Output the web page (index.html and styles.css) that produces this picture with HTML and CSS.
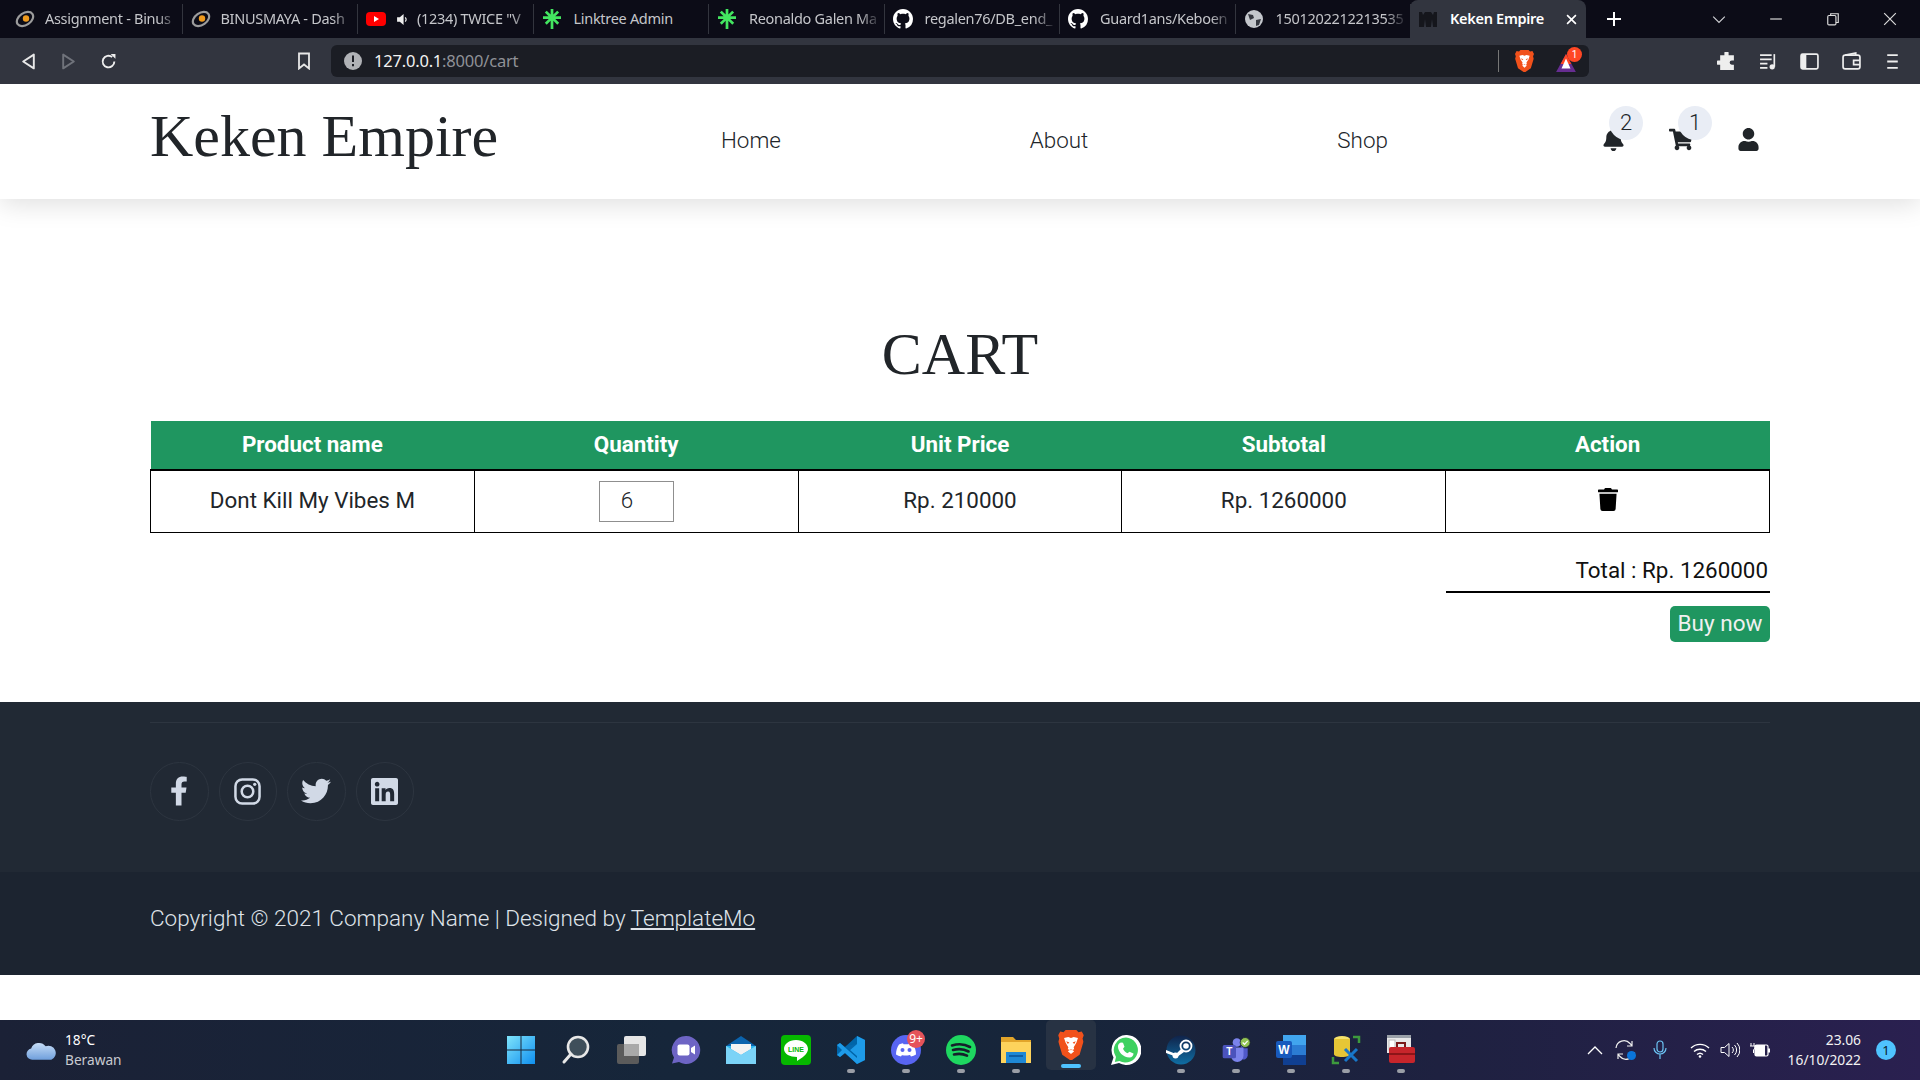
FILE: index.html
```html
<!DOCTYPE html>
<html lang="en">
<head>
<meta charset="utf-8">
<title>Keken Empire</title>
<link rel="stylesheet" href="styles.css">
</head>
<body>
<svg class="sprite" width="0" height="0" aria-hidden="true">
  <defs>
    <symbol id="brave" viewBox="0 0 24 28"><path fill="#f1511b" d="M7 0h10l2 2 3-.5L24 5l-1.200 3 .8 3-3.600 12L13 28h-2l-7.200-5L.2 11 1 8 0 5l2-3.500L5 2z"/><path fill="#fff" d="M12 18l-3 1.800 3 2.700 3-2.700zM5.500 7.500l4-1 2.500 1 2.500-1 4 1-1.500 4.500-2.500 4 .5 2-3 1-3-1 .5-2-2.500-4z"/><path fill="#f1511b" d="M7.500 10.500l3 1.200-1.500 1.300zM16.500 10.500l-3 1.200 1.500 1.300z"/></symbol>
    <symbol id="binus" viewBox="0 0 20 20"><ellipse cx="10" cy="10" rx="9" ry="6" fill="none" stroke="#9c9c9c" stroke-width="2.200" transform="rotate(-35 10 10)"/><circle cx="11" cy="9.500" r="3.200" fill="#ef9a1d"/></symbol>
    <symbol id="tree" viewBox="0 0 20 22"><path fill="#43e660" d="M8.500 0h3v6l4.200-4.200 2.100 2.100L13.600 8H20v3h-6.400l4.300 4.200-2.100 2.100L11.500 13v9h-3v-9l-4.300 4.300-2.100-2.100L6.400 11H0V8h6.200L2.100 3.900l2.100-2.100L8.500 6z"/></symbol>
    <symbol id="gh" viewBox="0 0 16 16"><path fill="#fff" d="M8 0C3.580 0 0 3.580 0 8c0 3.540 2.290 6.530 5.470 7.590.4.070.55-.17.55-.38 0-.19-.01-.82-.01-1.490-2.010.37-2.530-.49-2.690-.94-.09-.23-.48-.94-.82-1.130-.28-.15-.68-.52-.01-.53.63-.01 1.080.58 1.230.82.72 1.210 1.870.87 2.330.66.070-.52.28-.87.51-1.070-1.780-.2-3.640-.89-3.640-3.950 0-.87.31-1.590.82-2.150-.08-.2-.36-1.020.08-2.120 0 0 .67-.21 2.200.82.64-.18 1.320-.27 2-.27s1.360.09 2 .27c1.530-1.040 2.200-.82 2.200-.82.44 1.100.16 1.920.08 2.120.51.56.82 1.270.82 2.150 0 3.070-1.870 3.750-3.650 3.950.29.25.54.73.54 1.480 0 1.070-.01 1.930-.01 2.200 0 .21.15.46.55.38A8.010 8.010 0 0 0 16 8c0-4.420-3.580-8-8-8z"/></symbol>
  </defs>
</svg>

<div class="screen">
  <div class="tabbar">
    <div class="tab"><svg class="tab-ico tab-ico-tight" viewBox="0 0 20 20"><use href="#binus"/></svg><span class="tab-label">Assignment - Binus</span></div>
    <div class="tab"><svg class="tab-ico tab-ico-tight" viewBox="0 0 20 20"><use href="#binus"/></svg><span class="tab-label">BINUSMAYA - Dash</span></div>
    <div class="tab"><svg class="tab-ico" viewBox="0 0 20 20"><rect y="3" width="20" height="14" rx="4" fill="#f00"/><path d="M8 7l5 3-5 3z" fill="#fff"/></svg><svg class="tab-mute" viewBox="0 0 12 12"><path fill="#eee" d="M1 4h2.500L7 1v10L3.500 8H1z"/><path d="M8.500 4a3 3 0 0 1 0 4" stroke="#eee" fill="none"/></svg><span class="tab-label">(1234) TWICE "V</span></div>
    <div class="tab"><svg class="tab-ico" viewBox="0 0 20 22"><use href="#tree"/></svg><span class="tab-label tab-label-plain">Linktree Admin</span></div>
    <div class="tab"><svg class="tab-ico" viewBox="0 0 20 22"><use href="#tree"/></svg><span class="tab-label">Reonaldo Galen Ma</span></div>
    <div class="tab"><svg class="tab-ico" viewBox="0 0 16 16"><use href="#gh"/></svg><span class="tab-label">regalen76/DB_end_</span></div>
    <div class="tab"><svg class="tab-ico" viewBox="0 0 16 16"><use href="#gh"/></svg><span class="tab-label">Guard1ans/Keboen</span></div>
    <div class="tab"><svg class="tab-ico" viewBox="0 0 20 20"><circle cx="10" cy="10" r="9" fill="#c4c7cc"/><path d="M4 5l5 1 1 3-4 2zM12 11l5-1-2 6-3 1z" fill="#34373f"/></svg><span class="tab-label">1501202212213535</span></div>
    <div class="tab tab-active"><svg class="tab-ico" viewBox="0 0 20 20"><path fill="#15161c" d="M1 3h3l1 3 2-3h6l2 3 1-3h3v15h-4l-1-8-1 8H8l-1-8-1 8H1z"/></svg><span class="tab-label tab-label-active">Keken Empire</span><svg class="tab-close" viewBox="0 0 10 10"><path d="M1 1l8 8M9 1l-8 8" stroke="#fff" stroke-width="1.500"/></svg></div>
    <svg class="new-tab" viewBox="0 0 14 14"><path d="M7 0v14M0 7h14" stroke="#fff" stroke-width="2"/></svg>
    <div class="win-controls">
      <svg class="win-ico" viewBox="0 0 12 12"><path d="M1 4l5 5 5-5" stroke="#cfd0d4" fill="none"/></svg>
      <svg class="win-ico" viewBox="0 0 12 12"><path d="M1 6h10" stroke="#dcdcdc"/></svg>
      <svg class="win-ico" viewBox="0 0 12 12"><rect x="1.500" y="3" width="7" height="8" rx="1" stroke="#dcdcdc" fill="none"/><path d="M4 3V1.500h6.500V9H8.500" stroke="#dcdcdc" fill="none"/></svg>
      <svg class="win-ico" viewBox="0 0 12 12"><path d="M1 1l10 10M11 1L1 11" stroke="#dcdcdc"/></svg>
    </div>
  </div>

  <div class="toolbar">
    <div class="nav-btns">
      <svg class="tb-ico" viewBox="0 0 14 16"><path d="M12 1.500v13L2 8z" stroke="#e8e8e8" stroke-width="1.800" fill="none" stroke-linejoin="round"/></svg>
      <svg class="tb-ico" viewBox="0 0 14 16"><path d="M2 1.500v13L12 8z" stroke="#70737b" stroke-width="1.800" fill="none" stroke-linejoin="round"/></svg>
      <svg class="tb-ico" viewBox="0 0 16 16"><path d="M13.500 8A5.500 5.500 0 1 1 11.500 3.800" stroke="#eee" stroke-width="1.800" fill="none"/><path d="M10 1h4.500v4.500z" fill="#eee"/></svg>
    </div>
    <svg class="bookmark" viewBox="0 0 14 18"><path d="M2 1.500h10v15L7 12.500l-5 4z" stroke="#e8e8e8" stroke-width="1.800" fill="none"/></svg>
    <div class="omnibox">
      <svg class="info" viewBox="0 0 18 18"><circle cx="9" cy="9" r="9" fill="#b0b2b6"/><path d="M8 3.500h2V10H8zM8 12h2v2.200H8z" fill="#1b1d24"/></svg>
      <span class="url"><span class="url-host">127.0.0.1</span>:8000/cart</span>
      <span class="omni-sep"></span>
      <svg class="omni-brave" viewBox="0 0 24 28"><use href="#brave"/></svg>
      <div class="bat">
        <svg class="bat-ico" viewBox="0 0 22 20"><path d="M11 0l11 20H0z" fill="#662d91"/><path d="M11 0l6 11H5z" fill="#ff4724"/><path d="M11 5l5 11H6z" fill="#fff"/></svg>
        <span class="bat-badge">1</span>
      </div>
    </div>
    <div class="ext-btns">
      <svg class="ext-ico" viewBox="0 0 18 18"><path fill="#eee" d="M7 1a2 2 0 0 1 4 0v2h5v5h-2a2 2 0 0 0 0 4h2v5H3v-5H1a2 2 0 0 1 0-4h2V3h4z"/></svg>
      <svg class="ext-ico" viewBox="0 0 18 18"><path d="M1 3h11M1 7h11M1 11h7M1 15h7" stroke="#eee" stroke-width="1.600"/><path d="M14.500 2v12" stroke="#eee" stroke-width="1.600"/><circle cx="12.500" cy="14" r="2.500" fill="#eee"/></svg>
      <svg class="ext-ico" viewBox="0 0 18 18"><rect x="1" y="2" width="16" height="14" rx="1.500" stroke="#eee" stroke-width="1.600" fill="none"/><rect x="1" y="2" width="5" height="14" fill="#eee"/></svg>
      <svg class="ext-ico" viewBox="0 0 18 18"><rect x="1" y="3" width="16" height="13" rx="2" stroke="#eee" stroke-width="1.600" fill="none"/><path d="M3 3l10-2v2M17 8h-6v4h6" stroke="#eee" stroke-width="1.600" fill="none"/></svg>
      <svg class="ext-ico" viewBox="0 0 18 18"><path d="M4 3h10M4 9h10M4 15h10" stroke="#eee" stroke-width="1.800"/></svg>
    </div>
  </div>

  <div class="viewport">
    <header class="site-header">
      <div class="logo">Keken Empire</div>
      <nav class="site-nav">
        <a class="nav-link">Home</a>
        <a class="nav-link">About</a>
        <a class="nav-link">Shop</a>
      </nav>
      <div class="site-icons">
        <div class="site-icon">
          <svg class="ico-bell" viewBox="0 0 448 512"><path fill="#212529" d="M224 512c35.320 0 63.970-28.650 63.970-64H160.030c0 35.350 28.650 64 63.970 64zm215.390-149.710c-19.320-20.760-55.470-51.990-55.470-154.290 0-77.700-54.480-139.900-127.940-155.160V32c0-17.670-14.320-32-31.980-32s-31.980 14.330-31.980 32v20.840C118.560 68.100 64.080 130.300 64.080 208c0 102.300-36.150 133.530-55.470 154.290-6 6.450-8.660 14.160-8.610 21.710.11 16.400 12.980 32 32.100 32h383.800c19.120 0 32-15.600 32.100-32 .05-7.550-2.610-15.270-8.610-21.710z"/></svg>
          <span class="count count-bell">2</span>
        </div>
        <div class="site-icon">
          <svg class="ico-cart" viewBox="0 0 576 512"><path fill="#212529" d="M528.120 301.319l47.273-208C578.806 78.301 567.391 64 551.990 64H159.208l-9.166-44.810C147.758 8.021 137.930 0 126.529 0H24C10.745 0 0 10.745 0 24v16c0 13.255 10.745 24 24 24h69.883l70.248 343.435C147.325 417.100 136 435.222 136 456c0 30.928 25.072 56 56 56s56-25.072 56-56c0-15.674-6.447-29.835-16.824-40h209.647C430.447 426.165 424 440.326 424 456c0 30.928 25.072 56 56 56s56-25.072 56-56c0-22.172-12.888-41.332-31.579-50.405l5.517-24.276c3.413-15.018-8.002-29.319-23.403-29.319H218.117l-6.545-32h293.145c11.206 0 20.920-7.754 23.403-18.681z"/></svg>
          <span class="count count-cart">1</span>
        </div>
        <div class="site-icon">
          <svg class="ico-user" viewBox="0 0 448 512"><path fill="#212529" d="M224 256c70.700 0 128-57.300 128-128S294.700 0 224 0 96 57.300 96 128s57.300 128 128 128zm89.600 32h-16.700c-22.200 10.200-46.900 16-72.900 16s-50.600-5.800-72.900-16h-16.700C60.200 288 0 348.200 0 422.400V464c0 26.500 21.500 48 48 48h352c26.500 0 48-21.500 48-48v-41.600c0-74.200-60.200-134.400-134.400-134.400z"/></svg>
        </div>
      </div>
    </header>

    <main class="cart">
      <h1 class="cart-title">CART</h1>
      <table class="cart-table">
        <thead>
          <tr><th>Product name</th><th>Quantity</th><th>Unit Price</th><th>Subtotal</th><th>Action</th></tr>
        </thead>
        <tbody>
          <tr>
            <td class="cell-text">Dont Kill My Vibes M</td>
            <td><input class="qty" type="text" value="6"></td>
            <td class="cell-text">Rp. 210000</td>
            <td class="cell-text">Rp. 1260000</td>
            <td class="cell-text"><svg class="ico-trash" viewBox="0 0 448 512"><path d="M432 32H312l-9.400-18.700A24 24 0 0 0 281.100 0H166.800a23.720 23.720 0 0 0-21.400 13.300L136 32H16A16 16 0 0 0 0 48v32a16 16 0 0 0 16 16h416a16 16 0 0 0 16-16V48a16 16 0 0 0-16-16zM53.200 467a48 48 0 0 0 47.900 45h245.800a48 48 0 0 0 47.900-45L416 128H32z"/></svg></td>
          </tr>
        </tbody>
      </table>
      <div class="summary">
        <div class="total">Total : Rp. 1260000</div>
        <button class="buy" type="button">Buy now</button>
      </div>
    </main>

    <footer class="site-footer">
      <div class="footer-top">
        <div class="footer-rule"></div>
        <div class="socials">
          <a class="social"><svg class="soc-fb" viewBox="0 0 320 512"><path fill="#d1d9e6" d="M279.140 288l14.220-92.660h-88.910v-60.130c0-25.350 12.420-50.060 52.240-50.060h40.420V6.260S260.430 0 225.360 0c-73.220 0-121.080 44.380-121.080 124.720v70.620H22.890V288h81.390v224h100.170V288z"/></svg></a>
          <a class="social"><svg class="soc-ig" viewBox="0 0 28 28"><rect x="1.500" y="1.500" width="25" height="25" rx="7" fill="none" stroke="#d1d9e6" stroke-width="2.600"/><circle cx="14" cy="14" r="6" fill="none" stroke="#d1d9e6" stroke-width="2.600"/><circle cx="21.500" cy="6.500" r="1.700" fill="#d1d9e6"/></svg></a>
          <a class="social"><svg class="soc-tw" viewBox="0 0 512 512"><path fill="#d1d9e6" d="M459.370 151.716c.325 4.548.325 9.097.325 13.645 0 138.720-105.583 298.558-298.558 298.558-59.452 0-114.680-17.219-161.137-47.106 8.447.974 16.568 1.299 25.340 1.299 49.055 0 94.213-16.568 130.274-44.832-46.132-.975-84.792-31.188-98.112-72.772 6.498.974 12.995 1.624 19.818 1.624 9.421 0 18.843-1.300 27.614-3.573-48.081-9.747-84.143-51.980-84.143-102.985v-1.299c13.969 7.797 30.214 12.670 47.431 13.319-28.264-18.843-46.781-51.005-46.781-87.391 0-19.492 5.197-37.360 14.294-52.954 51.655 63.675 129.300 105.258 216.365 109.807-1.624-7.797-2.599-15.918-2.599-24.040 0-57.828 46.782-104.934 104.934-104.934 30.213 0 57.502 12.670 76.670 33.137 23.715-4.548 46.456-13.320 66.599-25.340-7.798 24.366-24.366 44.833-46.132 57.827 21.117-2.273 41.584-8.122 60.426-16.243-14.292 20.791-32.161 39.308-52.628 54.253z"/></svg></a>
          <a class="social"><svg class="soc-in" viewBox="0 32 448 448"><path fill="#d1d9e6" d="M416 32H31.900C14.300 32 0 46.500 0 64.300v383.400C0 465.500 14.300 480 31.900 480H416c17.600 0 32-14.500 32-32.300V64.300c0-17.800-14.400-32.300-32-32.300zM135.400 416H69V202.200h66.500V416zm-33.200-243c-21.300 0-38.500-17.300-38.500-38.500S80.900 96 102.200 96c21.200 0 38.500 17.300 38.500 38.500 0 21.300-17.200 38.500-38.500 38.500zm282.100 243h-66.400V312c0-24.800-.5-56.700-34.500-56.700-34.600 0-39.900 27-39.900 54.900V416h-66.400V202.200h63.700v29.200h.9c8.900-16.800 30.600-34.500 62.900-34.500 67.200 0 79.700 44.300 79.700 101.900V416z"/></svg></a>
        </div>
      </div>
      <div class="footer-bottom">Copyright © 2021 Company Name | Designed by <a class="footer-link">TemplateMo</a></div>
    </footer>
  </div>

  <div class="taskbar">
    <div class="weather">
      <svg class="cloud" viewBox="0 0 30 20"><defs><linearGradient id="cl" x1="0" y1="0" x2="0" y2="1"><stop offset="0" stop-color="#c6ddf7"/><stop offset="1" stop-color="#6f9fdc"/></linearGradient></defs><path fill="url(#cl)" d="M6 19a5.500 5.500 0 0 1-1-10.900A8 8 0 0 1 19 6a6.500 6.500 0 0 1 5.500 13z"/></svg>
      <div class="weather-text"><span class="temp">18°C</span><span class="cond">Berawan</span></div>
    </div>
    <div class="dock">
      <div class="app"><svg class="app-ico" viewBox="0 0 30 30"><defs><linearGradient id="w" x1="0" y1="0" x2="1" y2="1"><stop offset="0" stop-color="#7fe4fb"/><stop offset="1" stop-color="#0f8fef"/></linearGradient></defs><path fill="url(#w)" d="M1 1h13.500v13.500H1zM15.500 1H29v13.500H15.500zM1 15.500h13.500V29H1zM15.500 15.500H29V29H15.500z"/></svg></div>
      <div class="app"><svg class="app-ico" viewBox="0 0 30 30"><circle cx="17" cy="12" r="10" fill="#3f4f5b" stroke="#e8e8e8" stroke-width="2.600"/><path d="M10 19l-7 8" stroke="#e8e8e8" stroke-width="3" stroke-linecap="round"/></svg></div>
      <div class="app"><svg class="app-ico" viewBox="0 0 30 30"><rect x="8" y="1" width="22" height="20" rx="2" fill="#e6e6e6"/><rect x="1" y="9" width="22" height="20" rx="2" fill="#5b5b5b"/><rect x="8" y="9" width="15" height="12" fill="#a9a9a9"/></svg></div>
      <div class="app"><svg class="app-ico" viewBox="0 0 30 30"><path fill="#6d64c4" d="M15 1a14 14 0 1 1-7 26l-7 1.500 2-6A14 14 0 0 1 15 1z"/><rect x="6.500" y="9.500" width="12" height="11" rx="2" fill="#fff"/><path d="M20 13l4-2.500v9L20 17z" fill="#fff"/></svg></div>
      <div class="app"><svg class="app-ico" viewBox="0 0 30 30"><path fill="#0b63ad" d="M15 1l15 10v4H0v-4z"/><rect y="11" width="30" height="18" fill="#29b6f0"/><path fill="#f2f2f2" d="M5 9h20v5l-10 6-10-6z"/><path fill="#7bd3f7" d="M0 11l15 9 15-9v18H0z"/></svg></div>
      <div class="app"><svg class="app-ico" viewBox="0 0 30 30"><rect width="30" height="30" rx="4" fill="#06b800"/><path fill="#fff" d="M15 5c7 0 12 4 12 9 0 5-6 9-11 12v-4C9 22 3 19 3 14c0-5 5-9 12-9z"/><text class="line-text" x="15" y="17" text-anchor="middle">LINE</text></svg></div>
      <div class="app app-on"><svg class="app-ico" viewBox="0 0 30 30"><path fill="#0065a9" d="M21 1l8 4v20l-8 4-12-11-5 4-3-2v-10l3-2 5 4z"/><path fill="#1e9be8" d="M21 1l8 4v20l-8 4V21l-7-6 7-6zM1 10l3-2 17 15v6L9 18l-5 4-3-2 5-5z"/><path fill="#0d6fb5" d="M21 9l-7 6-5-4z" opacity=".4"/></svg></div>
      <div class="app app-on"><svg class="app-ico" viewBox="0 0 30 30"><circle cx="15" cy="15" r="15" fill="#5865f2"/><path fill="#fff" d="M8 9.500a16 16 0 0 1 4-1.200l.5 1c1.600-.2 3.400-.2 5 0l.5-1a16 16 0 0 1 4 1.200c2 3 3 6 3 10a14 14 0 0 1-5 2l-1-1.500 2-1c-4 2-9 2-12 0l2 1-1 1.500a14 14 0 0 1-5-2c0-4 1-7 3-10z"/><circle cx="11.500" cy="15" r="2" fill="#5865f2"/><circle cx="18.500" cy="15" r="2" fill="#5865f2"/></svg><span class="app-badge">9+</span></div>
      <div class="app app-on"><svg class="app-ico" viewBox="0 0 30 30"><circle cx="15" cy="15" r="15" fill="#1ed760"/><path d="M6 10.500c6-1.800 13-1.300 18 1.500M7 15c5-1.400 11-1 15.500 1.500M8 19.500c4.500-1.100 9-.8 13 1.200" stroke="#15202b" stroke-width="2.600" stroke-linecap="round" fill="none"/></svg></div>
      <div class="app app-on"><svg class="app-ico" viewBox="0 0 30 30"><path fill="#e2a52a" d="M0 2h12l3 3h15v23H0z"/><path fill="#fdd35c" d="M0 7h30v21H0z"/><path fill="#1e88d6" d="M5 17h20v11H5z"/><path fill="#0e5ea5" d="M8 20h14v2H8z"/></svg></div>
      <div class="app app-on app-active"><svg class="app-ico" viewBox="0 0 24 28"><use href="#brave"/></svg></div>
      <div class="app"><svg class="app-ico" viewBox="0 0 30 30"><path fill="#fff" d="M15 0a15 15 0 1 1-7 28L0 30l2.500-7.500A15 15 0 0 1 15 0z"/><path fill="#3ed160" d="M15 2.500A12.500 12.500 0 1 1 8.500 26L3.800 27l1.200-5A12.500 12.500 0 0 1 15 2.500z"/><path fill="#fff" d="M10 7.500l2 .2 1.500 4-1.500 2c1 2 2.500 3.500 4.500 4.500l2-1.500 4 1.800c0 2-1.500 4-4 4C12 22.500 7 16.500 7 11.500c0-2 1.200-3.500 3-4z"/></svg></div>
      <div class="app app-on"><svg class="app-ico" viewBox="0 0 30 30"><defs><linearGradient id="st" x1="0" y1="0" x2="0" y2="1"><stop offset="0" stop-color="#10234a"/><stop offset="1" stop-color="#0f6ea3"/></linearGradient></defs><circle cx="15" cy="15" r="14.500" fill="url(#st)"/><circle cx="20" cy="11" r="5.500" fill="none" stroke="#fff" stroke-width="1.800"/><circle cx="20" cy="11" r="2.800" fill="#fff"/><path d="M0 15l10 4 5-5 3 3-7 5-11-4z" fill="#fff"/><circle cx="9.500" cy="20.500" r="3" fill="#fff"/></svg></div>
      <div class="app app-on"><svg class="app-ico" viewBox="0 0 36 30"><circle cx="19" cy="6" r="5" fill="#7b83eb"/><circle cx="27" cy="9" r="3.500" fill="#5059c9"/><path fill="#5059c9" d="M23 13h9v9a5 5 0 0 1-7 4z"/><path fill="#7b83eb" d="M12 12h15v10a7.500 7.500 0 0 1-15 0z"/><rect x="2" y="9" width="16" height="16" rx="2" fill="#4b53bc"/><text class="teams-text" x="10" y="21" text-anchor="middle">T</text><circle cx="29" cy="6" r="6" fill="#92c353" stroke="#1c2333" stroke-width="1"/><path d="M26 6l2.200 2.200L32 4" stroke="#fff" stroke-width="1.500" fill="none"/></svg></div>
      <div class="app app-on"><svg class="app-ico" viewBox="0 0 30 30"><rect x="7" width="23" height="10" fill="#41a5ee"/><rect x="7" y="10" width="23" height="10" fill="#2b7cd3"/><rect x="7" y="20" width="23" height="10" fill="#103f91"/><rect y="6" width="16" height="17" rx="2" fill="#185abd"/><text class="word-text" x="8" y="19" text-anchor="middle">W</text></svg></div>
      <div class="app app-on"><svg class="app-ico" viewBox="0 0 30 30"><path d="M2 22v6h6M22 2h6v6" stroke="#3d9a3d" stroke-width="2.500" fill="none"/><ellipse cx="11" cy="4" rx="8" ry="3" fill="#f6e26b"/><path fill="#e6c636" d="M3 4h16v15c0 2-3 3-8 3s-8-1-8-3z"/><path d="M14 26l12-12M14 14l12 12" stroke="#1877c9" stroke-width="3"/></svg></div>
      <div class="app app-on"><svg class="app-ico" viewBox="0 0 30 30"><rect x="1" y="0" width="24" height="18" fill="#e8e8e8"/><rect x="1" y="0" width="24" height="3" fill="#9aa0a8"/><rect x="3" y="5" width="6" height="10" fill="#fff" stroke="#bbb"/><path d="M11 12V8h8v4" stroke="#7a1a1a" stroke-width="2" fill="none"/><rect x="3" y="12" width="26" height="16" rx="2" fill="#c7252b"/><rect x="3" y="18" width="26" height="2" fill="#8c1518"/></svg></div>
    </div>
    <div class="tray">
      <svg class="tray-chev" viewBox="0 0 16 10"><path d="M1 9l7-7 7 7" stroke="#fff" stroke-width="1.300" fill="none"/></svg>
      <div class="tray-sync">
        <svg class="tray-ico" viewBox="0 0 20 20"><path d="M1 8a8 8 0 0 1 14-4.500L17 6M19 12a8 8 0 0 1-14 4.500L3 14M17 1v5h-5M3 19v-5h5" stroke="#eee" stroke-width="1.200" fill="none"/></svg>
        <span class="sync-dot"></span>
      </div>
      <svg class="tray-mic" viewBox="0 0 14 20"><rect x="4" y="1" width="6" height="11" rx="3" fill="none" stroke="#6cc4f4" stroke-width="1.200"/><path d="M1 8a6 6 0 0 0 12 0M7 14v5" stroke="#6cc4f4" stroke-width="1.200" fill="none"/></svg>
      <svg class="tray-wifi" viewBox="0 0 20 16"><path d="M1 6a13 13 0 0 1 18 0M4 9.500a9 9 0 0 1 12 0M7 12.500a4.500 4.500 0 0 1 6 0" stroke="#fff" stroke-width="1.400" fill="none"/><circle cx="10" cy="14.500" r="1.300" fill="#fff"/></svg>
      <svg class="tray-vol" viewBox="0 0 20 16"><path d="M1 5.500h3.500L9 1.500v13l-4.500-4H1z" stroke="#fff" fill="none"/><path d="M12 5a4 4 0 0 1 0 6M14.500 3a7 7 0 0 1 0 10M17 1a10 10 0 0 1 0 14" stroke="#fff" fill="none"/></svg>
      <svg class="tray-bat" viewBox="0 0 20 16"><rect x="5" y="3" width="13" height="11" rx="1.500" fill="none" stroke="#fff" stroke-width="1.200"/><rect x="5" y="3" width="10" height="11" fill="#fff"/><rect x="18" y="6.500" width="2" height="4" fill="#fff"/><path d="M1 1v3M4 1v3M0 4h5v2l-1.500 2v3" stroke="#fff" fill="none"/></svg>
      <div class="clock"><span>23.06</span><span>16/10/2022</span></div>
      <span class="notif">1</span>
    </div>
  </div>
</div>
</body>
</html>
```

FILE: styles.css
```css
* { box-sizing: border-box; }
html, body { margin: 0; padding: 0; height: 100%; overflow: hidden; background: #fff; }
.sprite { position: absolute; }
.screen { width: 1920px; height: 1080px; display: flex; flex-direction: column; font-family: Roboto, "Liberation Sans", sans-serif; }

/* Browser chrome */
.tabbar { height: 38px; flex: none; background: #0c0c17; display: flex; align-items: stretch; padding-left: 7px; }
.tab { width: 175.500px; flex: none; display: flex; align-items: center; padding: 0 0 0 8px; margin-top: 4px; margin-bottom: 4px; border-right: 1px solid #33353e; overflow: hidden; font-family: "Noto Sans", sans-serif; font-size: 14.500px; letter-spacing: -.3px; color: #c5c6ca; }
.tab:nth-last-child(3) { border-right: none; }
.tab-ico { width: 20px; height: 20px; flex: none; margin-right: 12px; }
.tab-ico-tight { margin-right: 10px; }
.tab-mute { width: 13px; height: 13px; flex: none; margin-right: 8px; margin-left: -2px; }
.tab-label { white-space: nowrap; overflow: hidden; flex: 1; padding-bottom: 2px; -webkit-mask-image: linear-gradient(90deg, #000 82%, transparent 98%); mask-image: linear-gradient(90deg, #000 82%, transparent 98%); }
.tab-label-plain { -webkit-mask-image: none; mask-image: none; }
.tab-active { background: #32353f; margin: 0; margin-left: -1px; border: none; border-radius: 8px 8px 0 0; width: 176px; color: #fff; padding-right: 9px; }
.tab-label-active { -webkit-mask-image: none; mask-image: none; font-weight: 600; }
.tab-close { width: 11px; height: 11px; flex: none; }
.new-tab { width: 14px; height: 14px; margin: 12px 0 0 21px; flex: none; }
.win-controls { margin-left: auto; display: flex; align-items: center; gap: 43px; padding-right: 23px; }
.win-ico { width: 14px; height: 14px; }

.toolbar { height: 46px; flex: none; background: #32353f; display: flex; align-items: center; padding: 0 0 0 20px; }
.nav-btns { display: flex; align-items: center; gap: 23px; width: 277px; }
.tb-ico { width: 17px; height: 17px; flex: none; }
.ext-ico { width: 19px; height: 19px; flex: none; }
.bookmark { width: 14px; height: 18px; flex: none; margin-right: 20px; }
.omnibox { width: 1258px; height: 32px; flex: none; background: #1b1d24; border-radius: 6px; display: flex; align-items: center; padding: 0 0 0 13px; }
.info { width: 18px; height: 18px; flex: none; margin-right: 12px; }
.url { font-family: "Noto Sans", sans-serif; font-size: 16.500px; letter-spacing: -.2px; color: #8f9197; flex: 1; padding-bottom: 2px; }
.url-host { color: #f2f2f2; }
.omni-sep { width: 1px; height: 22px; background: #777; margin-right: 16px; }
.omni-brave { width: 19px; height: 24px; flex: none; margin-right: 21px; }
.bat { width: 34px; height: 24px; position: relative; flex: none; }
.bat-ico { width: 20px; height: 18px; position: absolute; left: 1px; top: 5px; }
.bat-badge { position: absolute; left: 12px; top: -2px; width: 15px; height: 15px; border-radius: 50%; background: #ff4724; color: #fff; font-size: 10px; line-height: 15px; text-align: center; }
.ext-btns { display: flex; align-items: center; gap: 22.500px; margin-left: auto; padding-right: 18px; }

/* Page */
.viewport { height: 936px; flex: none; overflow: hidden; display: flex; flex-direction: column; background: #fff; }
.site-header { height: 115px; flex: none; display: flex; align-items: center; padding: 0 150px; background: #fff; box-shadow: 0 5px 25px rgba(0,0,0,.13); position: relative; }
.logo { font-family: "Liberation Serif", serif; font-size: 60px; color: #212529; width: 348px; white-space: nowrap; margin-top: -10px; }
.site-nav { display: flex; gap: 249px; margin-left: 223px; margin-top: -4px; }
.nav-link { font-size: 22.400px; font-weight: 300; color: #212529; }
.site-icons { margin-left: auto; display: flex; align-items: center; gap: 45px; padding-right: 11px; margin-top: -4px; }
.site-icon { position: relative; height: 23px; display: flex; }
.ico-bell { width: 21px; height: 23px; }
.ico-cart { width: 24px; height: 23px; }
.ico-user { width: 21px; height: 23px; }
.count { position: absolute; width: 34px; height: 34px; border-radius: 50%; background: #e9edf5; font-size: 22px; font-weight: 300; color: #212529; text-align: center; line-height: 34px; top: -22px; }
.count-bell { left: 6px; }
.count-cart { left: 9px; }

.cart { flex: 1; padding: 0 150px; display: flex; flex-direction: column; }
.cart-title { margin: 119px 0 0; height: 103px; font-family: "Liberation Serif", serif; font-weight: 400; font-size: 60px; line-height: 72px; text-align: center; color: #212529; }
.cart-table { width: 1620px; border-collapse: collapse; table-layout: fixed; }
.cart-table th { background: #1f9660; color: #fff; font-weight: 700; height: 49px; font-size: 22.400px; border-bottom: 2px solid #000; padding: 0 0 2px; }
.cart-table td { height: 62px; border: 1px solid #000; text-align: center; color: #212529; padding: 0; font-weight: 400; font-size: 22.400px; }
.cart-table .cell-text { padding-bottom: 2px; }
.qty { width: 75px; height: 41px; border: 1px solid #8f8f8f; font: 300 22.400px Roboto, sans-serif; padding: 0 0 2px 21px; color: #212529; background: #fff; vertical-align: middle; }
.ico-trash { width: 20px; height: 23px; vertical-align: middle; margin-bottom: 3px; }
.summary { display: flex; flex-direction: column; align-items: flex-end; }
.total { width: 324px; height: 60px; border-bottom: 2px solid #000; text-align: right; font-size: 22.400px; line-height: 74px; padding-right: 2px; color: #111; }
.buy { margin-top: 13px; width: 100px; height: 36px; border: none; border-radius: 5px; background: #1f9660; color: #f0f0f0; font: 400 22.500px Roboto, sans-serif; padding: 0 0 2px; }

.site-footer { height: 273px; flex: none; background: #212934; margin-bottom: 45px; display: flex; flex-direction: column; }
.footer-top { height: 170px; flex: none; padding: 20px 150px 0; }
.footer-rule { height: 1px; background: #2d3540; }
.socials { display: flex; gap: 10px; margin-top: 39px; }
.social { width: 58.500px; height: 58.500px; border-radius: 50%; border: 1px solid #2d3540; display: flex; align-items: center; justify-content: center; }
.soc-fb { width: 18px; height: 30px; }
.soc-ig { width: 27px; height: 27px; }
.soc-tw { width: 30px; height: 30px; }
.soc-in { width: 27px; height: 27px; }
.footer-bottom { height: 103px; background: #1c2430; padding: 0 150px; font-size: 22.500px; font-weight: 300; line-height: 92px; color: #dfe3e9; }
.footer-link { text-decoration: underline; color: #dfe3e9; }

/* Taskbar */
.taskbar { height: 60px; flex: none; display: grid; grid-template-columns: 1fr auto 1fr; align-items: center; background: linear-gradient(90deg, #1b2136 0%, #16263a 35%, #17253a 55%, #1e2140 75%, #2a2050 100%); font-family: "Noto Sans", sans-serif; }
.weather { display: flex; align-items: center; padding-left: 26px; gap: 8px; }
.cloud { width: 31px; height: 21px; }
.weather-text { display: flex; flex-direction: column; font-size: 13.700px; line-height: 20px; }
.temp { color: #fff; }
.cond { color: #c8cad0; }
.dock { display: flex; margin-left: 1px; }
.app { width: 55px; height: 60px; display: flex; align-items: center; justify-content: center; position: relative; }
.app-ico { width: 30px; height: 30px; }
.app-on::after { content: ""; position: absolute; left: 24px; top: 49px; width: 8px; height: 4px; border-radius: 2px; background: #9a9ea6; }
.app-active { background: #273243; border-radius: 5px; height: 50px; width: 50px; margin: 0 2.500px; }
.app-active::after { left: 15px; top: 44px; width: 20px; background: #4fc3ff; }
.app-badge { position: absolute; left: 29px; top: 10px; width: 18px; height: 18px; border-radius: 50%; background: #e5535a; color: #fff; font-size: 12px; line-height: 17px; text-align: center; }
.line-text { font: 700 7px "Liberation Sans", sans-serif; fill: #06b800; }
.teams-text { font: 700 12px "Liberation Sans", sans-serif; fill: #fff; }
.word-text { font: 700 12px "Liberation Sans", sans-serif; fill: #fff; }
.tray { display: flex; align-items: center; justify-content: flex-end; padding-right: 24px; }
.tray-chev { width: 16px; height: 10px; margin-right: 12px; }
.tray-sync { position: relative; width: 20px; height: 20px; margin-right: 18px; }
.tray-ico { width: 20px; height: 20px; }
.sync-dot { position: absolute; right: -1px; bottom: 0; width: 9px; height: 9px; border-radius: 50%; background: #0a74da; }
.tray-mic { width: 14px; height: 20px; margin-right: 23px; }
.tray-wifi { width: 20px; height: 16px; margin-right: 10px; }
.tray-vol { width: 20px; height: 16px; margin-right: 10px; }
.tray-bat { width: 20px; height: 16px; margin-right: 18px; }
.clock { display: flex; flex-direction: column; align-items: flex-end; font-size: 13.800px; line-height: 20px; color: #f2f2f2; }
.notif { width: 20px; height: 20px; margin-left: 15px; border-radius: 50%; background: #4fc3ff; color: #0a1a2a; font-size: 13px; line-height: 20px; text-align: center; }
```
